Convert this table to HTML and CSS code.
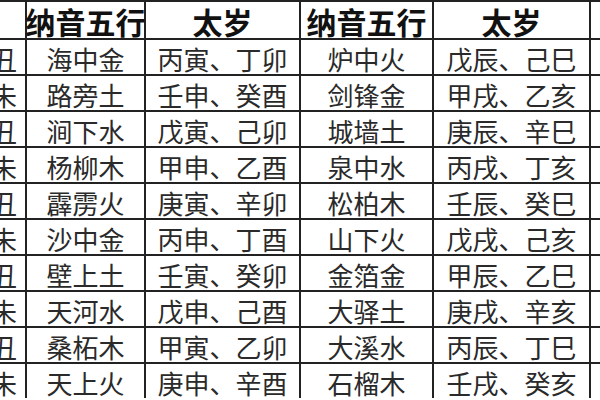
FILE: index.html
```html
<!DOCTYPE html>
<html lang="zh-CN">
<head>
<meta charset="utf-8">
<title>纳音五行 太岁</title>
<link rel="stylesheet" href="styles.css">
</head>
<body>
<div class="table">
  <div class="cell head edge"></div>
  <div class="cell head">纳音五行</div>
  <div class="cell head">太岁</div>
  <div class="cell head">纳音五行</div>
  <div class="cell head">太岁</div>
  <div class="cell head tail"></div>

  <div class="cell edge">丑</div><div class="cell">海中金</div><div class="cell">丙寅、丁卯</div><div class="cell">炉中火</div><div class="cell">戊辰、己巳</div><div class="cell tail"></div>
  <div class="cell edge">未</div><div class="cell">路旁土</div><div class="cell">壬申、癸酉</div><div class="cell">剑锋金</div><div class="cell">甲戌、乙亥</div><div class="cell tail"></div>
  <div class="cell edge">丑</div><div class="cell">涧下水</div><div class="cell">戊寅、己卯</div><div class="cell">城墙土</div><div class="cell">庚辰、辛巳</div><div class="cell tail"></div>
  <div class="cell edge">未</div><div class="cell">杨柳木</div><div class="cell">甲申、乙酉</div><div class="cell">泉中水</div><div class="cell">丙戌、丁亥</div><div class="cell tail"></div>
  <div class="cell edge">丑</div><div class="cell">霹雳火</div><div class="cell">庚寅、辛卯</div><div class="cell">松柏木</div><div class="cell">壬辰、癸巳</div><div class="cell tail"></div>
  <div class="cell edge">未</div><div class="cell">沙中金</div><div class="cell">丙申、丁酉</div><div class="cell">山下火</div><div class="cell">戊戌、己亥</div><div class="cell tail"></div>
  <div class="cell edge">丑</div><div class="cell">壁上土</div><div class="cell">壬寅、癸卯</div><div class="cell">金箔金</div><div class="cell">甲辰、乙巳</div><div class="cell tail"></div>
  <div class="cell edge">未</div><div class="cell">天河水</div><div class="cell">戊申、己酉</div><div class="cell">大驿土</div><div class="cell">庚戌、辛亥</div><div class="cell tail"></div>
  <div class="cell edge">丑</div><div class="cell">桑柘木</div><div class="cell">甲寅、乙卯</div><div class="cell">大溪水</div><div class="cell">丙辰、丁巳</div><div class="cell tail"></div>
  <div class="cell edge">未</div><div class="cell">天上火</div><div class="cell">庚申、辛酉</div><div class="cell">石榴木</div><div class="cell">壬戌、癸亥</div><div class="cell tail"></div>
</div>
</body>
</html>
```

FILE: styles.css
```css
html, body {
  margin: 0;
  padding: 0;
  background: #fff;
  overflow: hidden;
}

.table {
  display: grid;
  grid-template-columns: 25px 117px 153px 131px 155px 40px;
  grid-template-rows: 36px repeat(10, 34px);
  gap: 2px;
  padding-top: 2px;
  background: #222;
  width: 640px;
  font-family: "Noto Sans CJK SC", "Noto Sans", sans-serif;
}

.cell {
  background: #fff;
  display: flex;
  align-items: center;
  justify-content: center;
  white-space: nowrap;
  font-size: 26px;
  line-height: 1;
  color: #2a2a2a;
  padding-top: 4px;
  box-sizing: border-box;
  overflow: visible;
}

.head {
  font-size: 30px;
  font-weight: 700;
  color: #111;
  padding-top: 2px;
}

.edge {
  justify-content: flex-end;
  padding-right: 8px;
  overflow: hidden;
}

.tail {
  overflow: hidden;
}
```
